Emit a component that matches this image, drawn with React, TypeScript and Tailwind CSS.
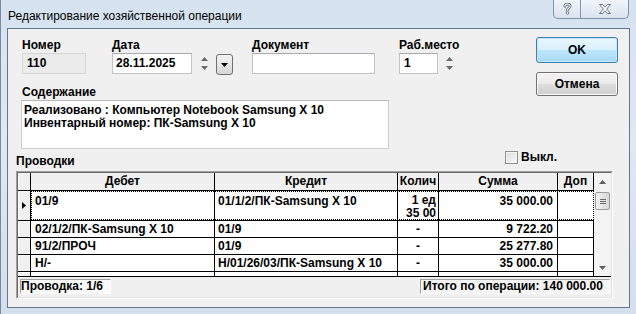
import React from 'react'

const rows = [
  { d: '02/1/2/ПК-Samsung X 10', k: '01/9', q: '-', s: '9 722.20' },
  { d: '91/2/ПРОЧ', k: '01/9', q: '-', s: '25 277.80' },
  { d: 'Н/-', k: 'Н/01/26/03/ПК-Samsung X 10', q: '-', s: '35 000.00' },
]

function Label({ children }: { children: React.ReactNode }) {
  return <div className="text-[12px] font-bold leading-[14px] whitespace-nowrap">{children}</div>
}

function Spin({ className }: { className?: string }) {
  return (
    <div className={`w-[13px] h-[21px] flex flex-col items-center justify-between py-[4px] ${className ?? ''}`}>
      <svg width="7" height="4" viewBox="0 0 7 4">
        <path d="M3.5 0 L7 4 L0 4Z" fill="#6a6a6a" />
      </svg>
      <svg width="7" height="4" viewBox="0 0 7 4">
        <path d="M0 0 L7 0 L3.5 4Z" fill="#6a6a6a" />
      </svg>
    </div>
  )
}

function IndCell({ h, children }: { h: string; children?: React.ReactNode }) {
  return (
    <div className={`w-[13px] ${h} shrink-0 bg-[#f0f0f0] border-r border-black shadow-[inset_1px_1px_0_#ffffff] flex items-center justify-center`}>
      {children}
    </div>
  )
}

export default function App() {
  return (
    <div className="w-[636px] h-[314px] overflow-hidden border-l border-[#7b8a9b] bg-[linear-gradient(180deg,#d5e2f0,#dfe8f3_45%,#d3dfed)] font-['Liberation_Sans',Arial,sans-serif] text-black">
      {/* Title bar */}
      <div className="h-[28px] flex items-start justify-between">
        <div className="pl-[7px] pt-[9px] text-[12px] leading-[14px]">Редактирование хозяйственной операции</div>
        <div className="mr-[7px] flex h-[19px] border border-t-0 border-[#8194aa] rounded-b-[5px] bg-[linear-gradient(180deg,#f1f5fa,#d9e3ee)]">
          <div className="w-[27px] flex items-center justify-center border-r border-[#8194aa]">
            <svg width="9" height="12" viewBox="0 0 9 12">
              <path d="M1.9 3.3 C1.9 1.6 3 1 4.5 1 C6.1 1 7.2 1.9 7.2 3.1 C7.2 4.4 6.2 4.9 5.3 5.5 C4.8 5.8 4.5 6.2 4.5 7.3" fill="none" stroke="#55657a" strokeWidth="2.8" strokeLinecap="round" />
              <path d="M1.9 3.3 C1.9 1.6 3 1 4.5 1 C6.1 1 7.2 1.9 7.2 3.1 C7.2 4.4 6.2 4.9 5.3 5.5 C4.8 5.8 4.5 6.2 4.5 7.3" fill="none" stroke="#ffffff" strokeWidth="1.2" strokeLinecap="round" />
              <circle cx="4.5" cy="10" r="1.3" fill="#ffffff" stroke="#55657a" strokeWidth="0.8" />
            </svg>
          </div>
          <div className="w-[47px] flex items-center justify-center">
            <svg width="12" height="10" viewBox="0 0 12 10">
              <path d="M0.5 0.5 L3.6 0.5 L6 3.2 L8.4 0.5 L11.5 0.5 L7.6 5 L11.5 9.5 L8.4 9.5 L6 6.8 L3.6 9.5 L0.5 9.5 L4.4 5Z" fill="#ffffff" stroke="#55657a" strokeWidth="0.9" strokeLinejoin="round" />
            </svg>
          </div>
        </div>
      </div>

      {/* Client area */}
      <div className="mx-[6px] h-[280px] border border-[#67778a] bg-[#f0f0f0]">
        <div className="flex">
          <div className="ml-[14px] pt-[9px] flex flex-col">
            <div className="flex items-start">
              <div className="flex flex-col">
                <Label>Номер</Label>
                <div className="mt-[1px] w-[64px] h-[21px] border border-[#d6d6d6] bg-[#ebebeb] pl-[4px] text-[12px] font-bold leading-[19px]">110</div>
              </div>
              <div className="ml-[26px] flex flex-col">
                <Label>Дата</Label>
                <div className="mt-[1px] flex items-start">
                  <div className="w-[80px] h-[21px] border border-[#c4c4c4] border-t-[#a9acb1] bg-white pl-[3px] text-[12px] font-bold leading-[19px]">28.11.2025</div>
                  <Spin className="ml-[6px]" />
                  <div className="ml-[5px] mt-[1px] w-[17px] h-[21px] rounded-[3px] border border-[#707070] bg-[linear-gradient(180deg,#f4f4f4,#e6e6e6_50%,#d6d6d6)] flex items-center justify-center">
                    <svg width="7" height="4" viewBox="0 0 7 4">
                      <path d="M0 0 L7 0 L3.5 4Z" fill="#000" />
                    </svg>
                  </div>
                </div>
              </div>
              <div className="ml-[19px] flex flex-col">
                <Label>Документ</Label>
                <div className="mt-[1px] w-[123px] h-[21px] border border-[#c4c4c4] border-t-[#a9acb1] bg-white" />
              </div>
              <div className="ml-[24px] flex flex-col">
                <Label>Раб.место</Label>
                <div className="mt-[1px] flex items-start">
                  <div className="w-[39px] h-[21px] border border-[#c4c4c4] border-t-[#a9acb1] bg-white pl-[4px] text-[12px] font-bold leading-[19px]">1</div>
                  <Spin className="ml-[5px]" />
                </div>
              </div>
            </div>

            <div className="mt-[10px]">
              <Label>Содержание</Label>
            </div>
            <div className="mt-[1px] -ml-[1px] w-[368px] h-[49px] border border-[#cfcfcf] border-t-[#b5b8bc] bg-white pl-[2px] pt-[3px] text-[12px] font-bold leading-[13px] whitespace-nowrap">
              <div>Реализовано : Компьютер Notebook Samsung X 10</div>
              <div>Инвентарный номер: ПК-Samsung X 10</div>
            </div>
          </div>

          <div className="ml-auto mr-[11px] pt-[8px] flex flex-col">
            <div className="w-[82px] h-[26px] rounded-[3px] border border-[#3c7fb1] bg-[linear-gradient(180deg,#eaf6fd,#d9f0fc_50%,#bee6fd_51%,#a7d9f5)] shadow-[inset_0_0_0_1px_#c5e8fb] flex items-center justify-center text-[12px] font-bold">OK</div>
            <div className="mt-[9px] w-[82px] h-[24px] rounded-[3px] border border-[#707070] bg-[linear-gradient(180deg,#f2f2f2,#ebebeb_50%,#dddddd_51%,#cfcfcf)] shadow-[inset_0_0_0_1px_#fcfcfc] flex items-center justify-center text-[12px] font-bold">Отмена</div>
          </div>
        </div>

        {/* Проводки header row */}
        <div className="mt-[2px] ml-[8px] w-[597px] flex items-start">
          <div className="w-[489px] pt-[3px] text-[12px] font-bold leading-[14px]">Проводки</div>
          <div className="flex items-start">
            <div className="w-[13px] h-[13px] border border-[#8e8f8f] bg-[linear-gradient(135deg,#dcdcdc,#fbfbfb)] shadow-[inset_0_0_0_1px_#f4f4f4]" />
            <div className="ml-[3px] text-[12px] font-bold leading-[13px]">Выкл.</div>
          </div>
        </div>

        {/* Grid */}
        <div className="mt-[3px] ml-[8px] w-[597px] h-[128px] border border-[#a0a0a0] border-r-white border-b-white">
          <div className="h-full border border-[#696969] border-r-[#e3e3e3] border-b-[#e3e3e3] flex flex-col">
            <div className="flex border-b border-black">
              <div className="w-[576px] flex flex-col text-[12px] font-bold">
                {/* header */}
                <div className="flex h-[18px] border-b border-black">
                  <IndCell h="h-[17px]" />
                  <div className="w-[184px] bg-[#f0f0f0] border-r border-black text-center leading-[17px]">Дебет</div>
                  <div className="w-[183px] bg-[#f0f0f0] border-r border-black text-center leading-[17px]">Кредит</div>
                  <div className="w-[41px] bg-[#f0f0f0] border-r border-black text-center leading-[17px]">Колич</div>
                  <div className="w-[119px] bg-[#f0f0f0] border-r border-black text-center leading-[17px]">Сумма</div>
                  <div className="w-[36px] bg-[#f0f0f0] border-r border-black text-center leading-[17px]">Доп</div>
                </div>
                {/* row 1 */}
                <div className="flex h-[30px] border-b border-black">
                  <IndCell h="h-[29px]">
                    <svg width="4" height="7" viewBox="0 0 4 7">
                      <path d="M0 0 L4 3.5 L0 7Z" fill="#000" />
                    </svg>
                  </IndCell>
                  <div className="flex bg-white outline-1 outline-dotted outline-black -outline-offset-1 leading-[12px]">
                    <div className="w-[184px] border-r border-black pl-[4px] pt-[4px] whitespace-nowrap">01/9</div>
                    <div className="w-[183px] border-r border-black pl-[3px] pt-[4px] whitespace-nowrap overflow-hidden">01/1/2/ПК-Samsung X 10</div>
                    <div className="w-[41px] border-r border-black pr-[2px] pt-[3px] text-right whitespace-nowrap overflow-hidden leading-[13px]">
                      <div>1 ед</div>
                      <div>35 00</div>
                    </div>
                    <div className="w-[119px] border-r border-black pr-[4px] pt-[4px] text-right whitespace-nowrap">35 000.00</div>
                    <div className="w-[36px]" />
                  </div>
                </div>
                {rows.map((r, i) => (
                  <div key={i} className="flex h-[17px] border-b border-black bg-white leading-[16px]">
                    <IndCell h="h-[16px]" />
                    <div className="w-[184px] border-r border-black pl-[4px] whitespace-nowrap overflow-hidden">{r.d}</div>
                    <div className="w-[183px] border-r border-black pl-[3px] whitespace-nowrap overflow-hidden">{r.k}</div>
                    <div className="w-[41px] border-r border-black text-center">{r.q}</div>
                    <div className="w-[119px] border-r border-black pr-[4px] text-right whitespace-nowrap">{r.s}</div>
                    <div className="w-[36px] border-r border-black" />
                  </div>
                ))}
                {/* partial row */}
                <div className="flex h-[4px] bg-white">
                  <IndCell h="h-[4px]" />
                  <div className="w-[184px] border-r border-black" />
                  <div className="w-[183px] border-r border-black" />
                  <div className="w-[41px] border-r border-black" />
                  <div className="w-[119px] border-r border-black" />
                  <div className="w-[36px] border-r border-black" />
                </div>
              </div>

              {/* scrollbar */}
              <div className="w-[17px] bg-[#f3f3f3] flex flex-col">
                <div className="h-[17px] flex items-center justify-center">
                  <svg width="7" height="4" viewBox="0 0 7 4">
                    <path d="M3.5 0 L7 4 L0 4Z" fill="#606060" />
                  </svg>
                </div>
                <div className="mt-[2px] mx-[1px] h-[18px] rounded-[2px] border border-[#9c9c9c] bg-[linear-gradient(90deg,#f5f5f5,#e4e4e4_50%,#d8d8d8)] flex flex-col items-center justify-center gap-[1px]">
                  <div className="w-[6px] h-[1px] bg-[#6a6a6a]" />
                  <div className="w-[6px] h-[1px] bg-[#6a6a6a]" />
                  <div className="w-[6px] h-[1px] bg-[#6a6a6a]" />
                </div>
                <div className="flex-1" />
                <div className="h-[17px] flex items-center justify-center">
                  <svg width="7" height="4" viewBox="0 0 7 4">
                    <path d="M0 0 L7 0 L3.5 4Z" fill="#606060" />
                  </svg>
                </div>
              </div>
            </div>

            {/* footer */}
            <div className="flex-1 flex justify-between items-start pt-[2px] pl-[2px] pr-[1px] text-[12px] font-bold">
              <div className="w-[91px] h-[15px] border border-[#a0a0a0] border-r-white border-b-white bg-[#fafafa] leading-[13px] whitespace-nowrap">Проводка: 1/6</div>
              <div className="w-[190px] h-[15px] border border-[#a0a0a0] border-r-white border-b-white bg-[#f4f4f4] pl-[2px] leading-[13px] whitespace-nowrap">Итого по операции: 140 000.00</div>
            </div>
          </div>
        </div>
      </div>
    </div>
  )
}
